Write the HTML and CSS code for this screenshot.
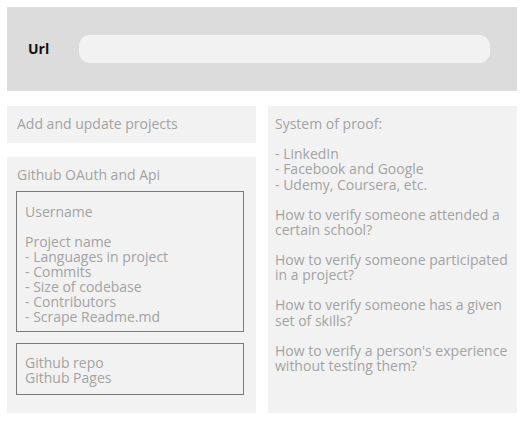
FILE: index.html
```html
<!DOCTYPE html>
<html>
<head>
<meta charset="utf-8">
<link rel="stylesheet" href="styles.css">
</head>
<body>
<header class="top">
  <span class="label">Url</span>
  <div class="url-input"></div>
</header>
<main class="cols">
  <section class="col-left">
    <div class="box box-small">Add and update projects</div>
    <div class="box box-big">
      <div class="title">Github OAuth and Api</div>
      <div class="inner inner-a">
        <p>Username</p>
        <p>Project name<br>- Languages in project<br>- Commits<br>- Size of codebase<br>- Contributors<br>- Scrape Readme.md</p>
      </div>
      <div class="inner inner-b">
        <p>Github repo<br>Github Pages</p>
      </div>
    </div>
  </section>
  <section class="box col-right">
    <p>System of proof:</p>
    <p>- LinkedIn<br>- Facebook and Google<br>- Udemy, Coursera, etc.</p>
    <p>How to verify someone attended a certain school?</p>
    <p>How to verify someone participated in a project?</p>
    <p>How to verify someone has a given set of skills?</p>
    <p>How to verify a person's experience without testing them?</p>
  </section>
</main>
</body>
</html>
```

FILE: styles.css
```css
html, body {
  margin: 0;
  padding: 0;
  background: #ffffff;
}
body {
  padding: 7px 8px 7px 7px;
  font-family: "Open Sans", "Noto Sans", sans-serif;
  font-size: 14px;
  line-height: 15px;
  color: #a3a3a3;
}
p {
  margin: 0;
}
.top {
  width: 510px;
  height: 84px;
  background: #dcdcdc;
  display: flex;
  align-items: center;
  box-sizing: border-box;
  padding-left: 21px;
  padding-bottom: 1px;
}
.label {
  font-weight: bold;
  color: #111;
  font-size: 14px;
  width: 51px;
}
.url-input {
  width: 411px;
  height: 28px;
  border-radius: 11px;
  background: #f2f2f2;
}
.cols {
  margin-top: 15px;
  width: 510px;
  display: grid;
  grid-template-columns: 249px 249px;
  column-gap: 12px;
}
.col-left {
  display: flex;
  flex-direction: column;
  gap: 14px;
}
.box {
  background: #f2f2f2;
  box-sizing: border-box;
}
.box-small {
  height: 37px;
  padding: 10px 10px;
}
.box-big {
  height: 256px;
  padding: 10px 12px 0 9px;
}
.title {
  padding-left: 1px;
  margin-bottom: 9px;
}
.inner {
  border: 1px solid #7a7a7a;
  padding: 0 8px;
}
.inner-a {
  height: 141px;
  box-sizing: border-box;
  padding-top: 12px;
}
.inner-a p + p {
  margin-top: 15px;
}
.inner-b {
  margin-top: 11px;
  height: 52px;
  box-sizing: border-box;
  padding-top: 11px;
}
.col-right {
  height: 307px;
  padding: 10px 7px;
  line-height: 15.4px;
}
.col-right p + p {
  margin-top: 14.5px;
}
```
